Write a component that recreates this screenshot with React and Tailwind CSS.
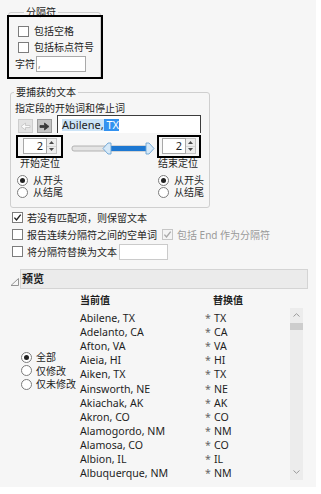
const rows = [
  ["Abilene, TX", "TX"],
  ["Adelanto, CA", "CA"],
  ["Afton, VA", "VA"],
  ["Aieia, HI", "HI"],
  ["Aiken, TX", "TX"],
  ["Ainsworth, NE", "NE"],
  ["Akiachak, AK", "AK"],
  ["Akron, CO", "CO"],
  ["Alamogordo, NM", "NM"],
  ["Alamosa, CO", "CO"],
  ["Albion, IL", "IL"],
  ["Albuquerque, NM", "NM"],
];

function Check({ checked, disabled }) {
  return (
    <span
      className={
        disabled
          ? "flex h-[11px] w-[11px] shrink-0 items-center justify-center border border-[#c6c6c6] bg-[#f4f4f4]"
          : "flex h-[11px] w-[11px] shrink-0 items-center justify-center border border-[#7c7c7c] bg-white"
      }
    >
      {checked && (
        <svg width="9" height="9" viewBox="0 0 9 9">
          <path
            d="M1.4 4.6 L3.5 7 L7.7 1.6"
            fill="none"
            stroke={disabled ? "#a9a9a9" : "#222"}
            strokeWidth="1.4"
          />
        </svg>
      )}
    </span>
  );
}

function Radio({ on }) {
  return (
    <span className="flex h-[11px] w-[11px] shrink-0 items-center justify-center rounded-full border border-[#7c7c7c] bg-white">
      {on && <span className="h-[5px] w-[5px] rounded-full bg-[#222]" />}
    </span>
  );
}

function Spinner() {
  return (
    <div className="flex h-[16px]">
      <div className="flex w-[24px] items-center justify-end border border-[#a8a8a8] bg-white pr-[3px] text-[11px]">
        2
      </div>
      <div className="flex w-[10px] flex-col border border-l-0 border-[#c4c4c4] bg-[#eeeeee]">
        <div className="flex flex-1 items-center justify-center">
          <svg width="5" height="3" viewBox="0 0 5 3">
            <path d="M0 3 L2.5 0 L5 3 Z" fill="#4a4a4a" />
          </svg>
        </div>
        <div className="flex flex-1 items-center justify-center border-t border-[#d6d6d6]">
          <svg width="5" height="3" viewBox="0 0 5 3">
            <path d="M0 0 L2.5 3 L5 0 Z" fill="#4a4a4a" />
          </svg>
        </div>
      </div>
    </div>
  );
}

function Arrow({ dir, fill, stroke }) {
  const d =
    dir === "right"
      ? "M1 3.5 H5.5 V1 L10 4.5 L5.5 8 V5.5 H1 Z"
      : "M10 3.5 H5.5 V1 L1 4.5 L5.5 8 V5.5 H10 Z";
  return (
    <svg width="11" height="9" viewBox="0 0 11 9">
      <path d={d} fill={fill} stroke={stroke} strokeWidth="0.8" />
    </svg>
  );
}

export default function App() {
  return (
    <div className="h-[494px] w-[321px] bg-white font-['Noto_Sans','Noto_Sans_CJK_SC',sans-serif] text-[10px] leading-[12px] text-[#1e1e1e]">
      <div className="relative h-[487px] w-[316px] bg-[#f6f6f6] pt-[5px]">
        {/* 分隔符 */}
        <fieldset className="ml-[8px] w-[93px] rounded-[3px] border border-[#cfcfcf] pb-[6px] pl-[9px]">
          <legend className="ml-[6px] px-[2px] leading-[14px]">分隔符</legend>
          <div className="mt-[4px] flex h-[16px] items-center gap-[5px]">
            <Check />
            <span>包括空格</span>
          </div>
          <div className="flex h-[16px] items-center gap-[5px]">
            <Check />
            <span>包括标点符号</span>
          </div>
          <div className="mt-[1px] flex h-[16px] items-center">
            <span className="-ml-[3px]">字符</span>
            <div className="ml-[1px] flex h-[16px] w-[50px] items-center border border-[#a9a9a9] bg-white pl-[1px] text-[#888]">
              ,
            </div>
          </div>
        </fieldset>
        <div className="pointer-events-none absolute left-[7px] top-[15px] h-[64px] w-[96px] border-2 border-black" />

        {/* 要捕获的文本 */}
        <fieldset className="ml-[10px] mt-[6px] w-[200px] rounded-[3px] border border-[#cfcfcf] pb-[9px]">
          <legend className="ml-[3px] px-[2px] leading-[14px]">要捕获的文本</legend>
          <div className="ml-[4px] mt-[3px]">指定段的开始词和停止词</div>
          <div className="ml-[7px] mt-[1px] flex h-[18px] items-end">
            <div className="flex h-[14px] w-[15px] items-center justify-center border border-[#cdcdcd] bg-[#e3e3e3]">
              <Arrow dir="left" fill="#fafafa" stroke="#c2c2c2" />
            </div>
            <div className="ml-[4px] flex h-[14px] w-[15px] items-center justify-center border border-[#9c9c9c] bg-[#c4c4c4]">
              <Arrow dir="right" fill="#3a3a3a" stroke="#3a3a3a" />
            </div>
            <div className="ml-[5px] flex h-[18px] w-[144px] items-center border border-[#3c3c3c] border-b-0 bg-white pl-[4px] text-[11px]">
              <span className="bg-[#cce4f7]">Abilene,</span>
              <span className="bg-[#3392f0] text-white">&nbsp;TX</span>
            </div>
          </div>
          <div className="ml-[5px] mt-[2px] flex">
            <div className="flex w-[47px] flex-col">
              <div className="h-[23px] w-[47px] border-2 border-black pb-[2px] pl-[5px] pt-[1px]">
                <Spinner />
              </div>
              <div className="-mt-[1px] ml-[4px] whitespace-nowrap">开始定位</div>
              <div className="ml-[1px] mt-[5px] flex h-[12px] items-center gap-[5px] whitespace-nowrap leading-[11px]">
                <Radio on />
                <span>从开头</span>
              </div>
              <div className="ml-[1px] flex h-[12px] items-center gap-[5px] whitespace-nowrap leading-[11px]">
                <Radio />
                <span>从结尾</span>
              </div>
            </div>
            <svg width="94" height="23" viewBox="0 0 94 23" className="shrink-0">
              <rect x="9" y="11" width="76" height="5" rx="2" fill="#e4e4e4" stroke="#a3a3a3" strokeWidth="0.8" />
              <rect x="47" y="11" width="37" height="5" fill="#1d78d2" />
              <polygon points="40,13.5 45,8 48,8 48,19 45,19" fill="#d6e9f8" stroke="#6aa3d4" strokeWidth="0.9" />
              <polygon points="91,13.5 86,8 83,8 83,19 86,19" fill="#d6e9f8" stroke="#6aa3d4" strokeWidth="0.9" />
            </svg>
            <div className="flex w-[44px] flex-col">
              <div className="h-[23px] w-[44px] border-2 border-black pb-[2px] pl-[3px] pt-[1px]">
                <Spinner />
              </div>
              <div className="-mt-[1px] ml-[1px] whitespace-nowrap">结束定位</div>
              <div className="ml-[1px] mt-[5px] flex h-[12px] items-center gap-[5px] whitespace-nowrap leading-[11px]">
                <Radio on />
                <span>从开头</span>
              </div>
              <div className="ml-[1px] flex h-[12px] items-center gap-[5px] whitespace-nowrap leading-[11px]">
                <Radio />
                <span>从结尾</span>
              </div>
            </div>
          </div>
        </fieldset>

        {/* options */}
        <div className="ml-[12px] mt-[1px] flex h-[17px] items-center gap-[4px]">
          <Check checked />
          <span>若没有匹配项，则保留文本</span>
        </div>
        <div className="ml-[12px] flex h-[17px] items-center gap-[4px]">
          <Check />
          <span>报告连续分隔符之间的空单词</span>
          <span className="ml-[1px]">
            <Check checked disabled />
          </span>
          <span className="text-[#9a9a9a]">包括 End 作为分隔符</span>
        </div>
        <div className="ml-[12px] flex h-[17px] items-center gap-[4px]">
          <Check />
          <span>将分隔符替换为文本</span>
          <div className="-ml-[2px] h-[16px] w-[49px] border border-[#cbcbcb] bg-white" />
        </div>

        {/* 预览 */}
        <div className="mt-[9px] flex items-center">
          <svg width="10" height="8" viewBox="0 0 10 8" className="ml-[10px] mt-[6px]">
            <polygon points="1,7.5 8.5,0.5 8.5,7.5" fill="none" stroke="#8a8a8a" strokeWidth="0.9" />
          </svg>
          <div className="flex h-[20px] w-[288px] items-center border border-[#d4d4d4] bg-[#ebebeb] pl-[1px] text-[11px] font-bold">
            预览
          </div>
        </div>
        <div className="flex">
          <div className="ml-[21px] mt-[61px] flex w-[59px] flex-col">
            <div className="flex h-[14px] items-center gap-[4px] whitespace-nowrap">
              <Radio on />
              <span>全部</span>
            </div>
            <div className="flex h-[13.5px] items-center gap-[4px] whitespace-nowrap">
              <Radio />
              <span>仅修改</span>
            </div>
            <div className="flex h-[13.5px] items-center gap-[4px] whitespace-nowrap">
              <Radio />
              <span>仅未修改</span>
            </div>
          </div>
          <div className="flex w-[223px] flex-col">
            <div className="mt-[4px] flex h-[14px] items-center font-bold">
              <span className="w-[133px]">当前值</span>
              <span>替换值</span>
            </div>
            <div className="mt-[1px] flex">
              <div className="w-[210px] pt-[3px] text-[10.6px]">
                {rows.map(([name, val]) => (
                  <div key={name} className="flex h-[14.1px] items-center">
                    <span className="w-[125px] whitespace-nowrap">{name}</span>
                    <span className="w-[9px] text-[#666]">*</span>
                    <span>{val}</span>
                  </div>
                ))}
              </div>
              <div className="flex h-[172px] w-[13px] flex-col items-center bg-[#ececec]">
                <svg width="7" height="4" viewBox="0 0 7 4" className="mt-[5px]">
                  <path d="M0.5 3.5 L3.5 0.7 L6.5 3.5" fill="none" stroke="#9a9a9a" strokeWidth="1" />
                </svg>
                <div className="mt-[6px] h-[7px] w-[13px] bg-[#cdcdcd]" />
                <div className="flex-1" />
                <svg width="7" height="4" viewBox="0 0 7 4" className="mb-[6px]">
                  <path d="M0.5 0.5 L3.5 3.3 L6.5 0.5" fill="none" stroke="#9a9a9a" strokeWidth="1" />
                </svg>
              </div>
            </div>
          </div>
        </div>
      </div>
    </div>
  );
}
